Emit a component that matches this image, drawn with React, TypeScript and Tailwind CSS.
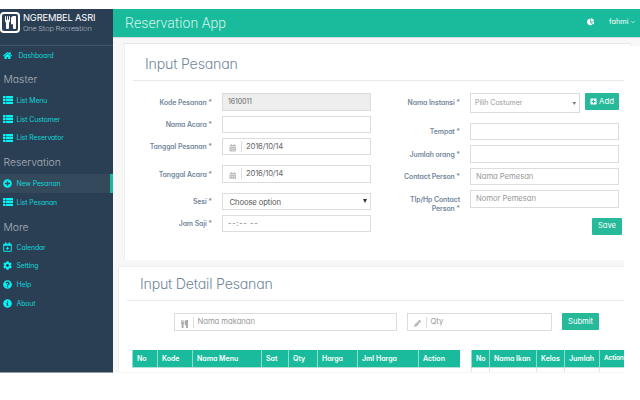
import React from "react";
import {
  FaCalendarAlt,
  FaChartPie,
  FaCog,
  FaHome,
  FaInfoCircle,
  FaPencilAlt,
  FaPlusCircle,
  FaPlusSquare,
  FaQuestionCircle,
} from "react-icons/fa";

function Cutlery({ className }: { className: string }) {
  return (
    <svg viewBox="0 0 1408 1792" fill="currentColor" preserveAspectRatio="none" className={className}>
      <path transform="translate(0 1536) scale(1 -1)" d="M640 1472v-640q0 -61 -35.500 -111t-92.500 -70v-779q0 -52 -38 -90t-90 -38h-128q-52 0 -90 38t-38 90v779q-57 20 -92.500 70t-35.500 111v640q0 26 19 45t45 19t45 -19t19 -45v-416q0 -26 19 -45t45 -19t45 19t19 45v416q0 26 19 45t45 19t45 -19t19 -45v-416q0 -26 19 -45t45 -19t45 19t19 45v416q0 26 19 45t45 19t45 -19t19 -45zM1408 1472v-1600q0 -52 -38 -90t-90 -38h-128q-52 0 -90 38t-38 90v512h-224q-13 0 -22.500 9.500t-9.500 22.500v800q0 132 94 226t226 94h256q26 0 45 -19t19 -45z" />
    </svg>
  );
}

function ListIcon() {
  return (
    <svg viewBox="0 0 20 16" fill="currentColor" className="h-[8px] w-[10px]">
      <path d="M0 0h5v4.500H0zM6.200 0H20v4.500H6.200zM0 5.700h5v4.500H0zM6.200 5.700H20v4.500H6.200zM0 11.400h5v4.500H0zM6.200 11.400H20v4.500H6.200z" />
    </svg>
  );
}

function CalendarPlus({ className }: { className: string }) {
  return (
    <svg viewBox="0 0 20 22" fill="none" stroke="currentColor" className={className}>
      <path strokeWidth="2" d="M1.500 4.500h17V20.500h-17z" />
      <path strokeWidth="3" d="M2 6.500h16M6 1v5M14 1v5" />
      <path strokeWidth="2" d="M10 10.500v7M6.500 14h7" />
    </svg>
  );
}

type ItemProps = { icon: React.ReactNode; label: string; text?: string; active?: boolean };

function Item({ icon, label, text = "", active = false }: ItemProps) {
  return (
    <div className={`flex h-[18.750px] shrink-0 items-center text-[6.900px] tracking-[-0.120px] text-[#12d3d6] ${active ? "border-r-[3px] border-[#1abb9c] bg-[#35495d]" : ""}`}>
      <span className="flex w-[16.500px] shrink-0 items-center pl-[3px] text-[9px] text-[#00f4f4]">{icon}</span>
      <span className={`whitespace-nowrap pt-[2px] ${text}`}>{label}</span>
    </div>
  );
}

function Heading({ children, className }: { children: string; className: string }) {
  return <div className={`flex shrink-0 items-center pl-[3.500px] text-[10.400px] font-light text-[#a9b1b9] ${className}`}>{children}</div>;
}

function Sidebar() {
  return (
    <aside className="flex w-[113px] shrink-0 flex-col border-b border-[#8d99a6] bg-[#2a3f54]">
      <div className="flex h-[37px] shrink-0 border-b border-[#425567] pt-[3px]">
        <span className="flex h-[21px] w-[20px] shrink-0 items-center justify-center rounded-[4px] border-2 border-white text-white">
          <Cutlery className="h-[13px] w-[11px]" />
        </span>
        <div className="pl-[3px] whitespace-nowrap text-white">
          <div className="h-[11px] text-[9.300px] leading-[12px] tracking-[-0.150px]">NGREMBEL ASRI</div>
          <div className="font-['Roboto',sans-serif] text-[8px] leading-[11px] font-light tracking-[-0.160px] text-[#b5bdc5]">One Stop Recreation</div>
        </div>
      </div>
      <Item icon={<FaHome />} label="Dashboard" text="pl-[2px]" />
      <Heading className="h-[26px] pt-[5px]">Master</Heading>
      <Item icon={<ListIcon />} label="List Menu" />
      <Item icon={<ListIcon />} label="List Customer" />
      <Item icon={<ListIcon />} label="List Reservator" />
      <Heading className="h-[27px] pt-[5px]">Reservation</Heading>
      <Item icon={<FaPlusCircle />} label="New Pesanan" active />
      <Item icon={<ListIcon />} label="List Pesanan" />
      <Heading className="h-[26px] pt-[6px]">More</Heading>
      <Item icon={<CalendarPlus className="h-[10px] w-[9px]" />} label="Calendar" />
      <Item icon={<FaCog />} label="Setting" />
      <Item icon={<FaQuestionCircle />} label="Help" />
      <Item icon={<FaInfoCircle />} label="About" />
    </aside>
  );
}

function Row({ label, children, className, labelWidth }: { label: React.ReactNode; children?: React.ReactNode; className: string; labelWidth: string }) {
  return (
    <div className={`flex items-start ${className}`}>
      <div className={`mr-[10px] shrink-0 pt-[4.500px] text-right text-[6.900px] leading-[9.500px] font-semibold tracking-[-0.080px] whitespace-nowrap text-[#73879c] ${labelWidth}`}>{label}</div>
      {children}
    </div>
  );
}

const box = "flex h-[17.500px] w-[149px] shrink-0 border border-[#dcdcdc] text-[7.700px] tracking-[-0.060px] leading-[15px] whitespace-nowrap";

function DateBox() {
  return (
    <div className={`${box} items-center bg-white text-[#666]`}>
      <FaCalendarAlt className="mt-[3px] ml-[6px] text-[7.500px] text-[#bbb]" />
      <span className="ml-[4.500px] h-[11px] border-l border-[#ddd]" />
      <span className="ml-[4px] tracking-[-0.200px]">2016/10/14</span>
    </div>
  );
}

function ReservationPanel() {
  return (
    <section className="ml-[11px] h-[214px] shrink-0 border-l border-[#eeeeee] bg-white pl-[8px]">
      <h2 className="h-[35px] border-b border-[#e6e9ed] pt-[6px] pl-[12px] text-[14.200px] leading-[23px] font-light tracking-[-0.200px] text-[#73879c]">Input Pesanan</h2>
      <div className="flex pt-[12px]">
        <div className="w-[239px]">
          <Row label="Kode Pesanan *" className="h-[22.500px]" labelWidth="w-[79px]">
            <div className={`${box} bg-[#eeeeee] pl-[5px] text-[#666]`}><span className="text-[7px] tracking-[-0.100px]">1610011</span></div>
          </Row>
          <Row label="Nama Acara *" className="h-[22px]" labelWidth="w-[79px]"><div className={box} /></Row>
          <Row label="Tanggal Pesanan *" className="h-[27.500px]" labelWidth="w-[79px]"><DateBox /></Row>
          <Row label="Tanggal Acara *" className="h-[27.500px]" labelWidth="w-[79px]"><DateBox /></Row>
          <Row label="Sesi *" className="h-[22px]" labelWidth="w-[79px]">
            <div className={`${box} items-center justify-between pt-[2px] pr-[3px] pl-[6.500px] text-[#555]`}>
              <span className="tracking-[-0.120px]">Choose option</span>
              <svg viewBox="0 0 4 4" className="mb-[3px] h-[4px] w-[4px]"><path d="M0 0h4L2 4z" fill="#333" /></svg>
            </div>
          </Row>
          <Row label="Jam Saji *" className="h-[22px]" labelWidth="w-[79px]">
            <div className={`${box} pl-[5px] text-[#777]`}><span className="tracking-[0.600px]">--:-- --</span></div>
          </Row>
        </div>
        <div className="flex-1">
          <Row label="Nama Instansi *" className="h-[29.500px]" labelWidth="w-[88px]">
            <div className="flex h-[20px] w-[110px] items-center justify-between border border-[#dcdcdc] pr-[3px] pl-[4px] text-[7px] text-[#999]">
              <span className="tracking-[-0.050px]">Pilih Costumer</span>
              <svg viewBox="0 0 4 3" className="h-[3px] w-[4.500px]"><path d="M0 0h4L2 3z" fill="#888" /></svg>
            </div>
            <button className="ml-[5px] flex h-[17px] w-[34px] items-center justify-center gap-[2px] rounded-[1px] bg-[#26b99a] text-[7.800px] text-white"><FaPlusSquare className="text-[7px]" />Add</button>
          </Row>
          <Row label="Tempat *" className="h-[22.500px]" labelWidth="w-[88px]"><div className={box} /></Row>
          <Row label="Jumlah orang *" className="h-[22.500px]" labelWidth="w-[88px]"><div className={box} /></Row>
          <Row label="Contact Person *" className="h-[22.500px]" labelWidth="w-[88px]"><div className={`${box} pl-[5px] text-[#999]`}>Nama Pemesan</div></Row>
          <Row label={<>Tlp/Hp Contact<br />Person *</>} className="h-[27.500px]" labelWidth="w-[88px]"><div className={`${box} pl-[5px] text-[#999]`}>Nomor Pemesan</div></Row>
          <button className="ml-[220px] flex h-[17px] w-[30px] items-center justify-center rounded-[1px] bg-[#26b99a] text-[7.600px] text-white">Save</button>
        </div>
      </div>
    </section>
  );
}

function HeadCell({ w, children }: { w: string; children: string }) {
  return <div className={`shrink-0 border-l border-[#8fdccb] pl-[4px] ${w}`}>{children}</div>;
}

const tableHead = "flex h-[17.500px] items-stretch border-b border-[#b8dfd6] bg-[#1abb9c] text-[7px] leading-[17px] font-semibold whitespace-nowrap text-white";

function DetailPanel() {
  return (
    <section className="mt-[6px] ml-[5px] h-[106px] shrink-0 overflow-hidden border-t border-l border-[#eeeeee] bg-white">
      <h2 className="ml-[8px] h-[34px] border-b border-[#e6e9ed] pt-[5px] pl-[13px] text-[14.200px] leading-[23px] font-light tracking-[-0.220px] text-[#73879c]">Input Detail Pesanan</h2>
      <div className="flex h-[49px] pt-[12px] pl-[55px] text-[7.700px] tracking-[-0.050px] text-[#999]">
        <div className="flex h-[18px] w-[223px] items-center border border-[#dcdcdc] pl-[6px]">
          <Cutlery className="mt-[3px] h-[8px] w-[7px] text-[#aaa]" />
          <span className="mr-[4px] ml-[4.500px] h-[11px] border-l border-[#ddd]" />Nama makanan
        </div>
        <div className="ml-[10px] flex h-[18px] w-[145px] items-center border border-[#dcdcdc] pl-[6px]">
          <FaPencilAlt className="mt-[3px] text-[7px] text-[#aaa]" />
          <span className="mr-[4px] ml-[4.500px] h-[11px] border-l border-[#ddd]" />Qty
        </div>
        <button className="ml-[10px] flex h-[17px] w-[37px] items-center justify-center rounded-[1px] bg-[#26b99a] text-white">Submit</button>
      </div>
      <div className="flex pl-[13px]">
        <div className={`w-[328px] ${tableHead}`}>
          <HeadCell w="w-[25px]">No</HeadCell><HeadCell w="w-[35px]">Kode</HeadCell><HeadCell w="w-[69px]">Nama Menu</HeadCell><HeadCell w="w-[27px]">Sat</HeadCell>
          <HeadCell w="w-[29px]">Qty</HeadCell><HeadCell w="w-[40px]">Harga</HeadCell><HeadCell w="w-[61px]">Jml Harga</HeadCell><HeadCell w="w-[41px]">Action</HeadCell>
        </div>
        <div className="ml-[11px] w-[153px]">
          <div className={tableHead}>
            <HeadCell w="w-[18px]">No</HeadCell><HeadCell w="w-[47px]">Nama Ikan</HeadCell><HeadCell w="w-[28px]">Kelas</HeadCell><HeadCell w="w-[35px]">Jumlah</HeadCell><HeadCell w="w-[25px] text-[6.600px] tracking-[-0.150px]">Action</HeadCell>
          </div>
          <div className="flex h-[5px]">
            <div className="w-[18px] border-l border-[#e5e5e5]" /><div className="w-[47px] border-l border-[#e5e5e5]" /><div className="w-[28px] border-l border-[#e5e5e5]" /><div className="w-[35px] border-l border-[#e5e5e5]" />
            <div className="flex w-[25px] items-end border-l border-[#e5e5e5] pl-[8px]"><div className="h-px w-[14px] bg-[#f6dcdc]" /></div>
          </div>
        </div>
      </div>
    </section>
  );
}

export default function App() {
  return (
    <div className="h-[400px] w-[640px] overflow-hidden bg-white pt-[9px] font-['Inter',sans-serif] [font-feature-settings:'cv11']">
      <div className="flex h-[363.500px]">
        <Sidebar />
        <main className="flex flex-1 flex-col">
          <header className="flex h-[28.500px] shrink-0 items-center border-b border-[#d5dddb] bg-[#1abb9c] text-white">
            <h1 className="flex-1 pl-[12px] font-['Roboto',sans-serif] text-[14px] leading-[18px] font-light tracking-[0.050px] text-[#d8f3ed]">Reservation App</h1>
            <FaChartPie className="mr-[15px] mb-[2px] text-[7.500px]" />
            <span className="text-[7.300px]">fahmi</span>
            <svg viewBox="0 0 5 4" className="mr-[5.500px] mb-px ml-[2px] h-[4px] w-[4px]"><path d="M.5 1 2.500 3 4.500 1" fill="none" stroke="white" strokeWidth=".9" /></svg>
          </header>
          <div className="h-[8.500px] shrink-0 bg-[#f7f7f7] pt-[5px] pr-[9px] pl-[10px]">
            <div className="h-[3.500px] border border-b-0 border-[#e9e9e9] bg-white" />
          </div>
          <div className="flex w-[511px] flex-1 flex-col bg-[#f7f7f7]">
            <ReservationPanel />
            <DetailPanel />
          </div>
        </main>
      </div>
    </div>
  );
}
